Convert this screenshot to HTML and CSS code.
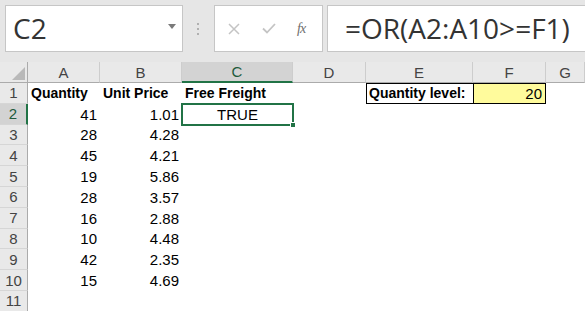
FILE: index.html
```html
<!DOCTYPE html>
<html>
    <head>
        <title>Free Freight</title>
        <link rel="stylesheet" href="styles.css">
    </head>
    <body>
        <div class="toolbar">
            <div class="namebox">
                <span class="name">C2</span>
                <svg class="arrow" width="8" height="5" viewBox="0 0 8 5"><path d="M0 0H8L4 5Z" fill="#7a7a7a"/></svg>
            </div>
            <div class="grip">
                <svg width="3" height="12" viewBox="0 0 3 12"><rect x="0" y="0" width="2" height="2" fill="#b0b0b0"/><rect x="0" y="5" width="2" height="2" fill="#b0b0b0"/><rect x="0" y="10" width="2" height="2" fill="#b0b0b0"/></svg>
            </div>
            <div class="buttons">
                <svg class="btn" width="12" height="12" viewBox="0 0 12 12"><path d="M1 1L11 11M11 1L1 11" stroke="#c4c4c4" stroke-width="1.5"/></svg>
                <svg class="btn" width="14" height="11" viewBox="0 0 14 11"><path d="M1 5.5L5 9.5L13 1" stroke="#c4c4c4" stroke-width="1.8" fill="none"/></svg>
                <span class="fx">fx</span>
            </div>
            <div class="formula">=OR(A2:A10&gt;=F1)</div>
        </div>

        <div class="sheet">
            <div class="corner"><svg width="13" height="13" viewBox="0 0 13 13"><path d="M13 0V13H0Z" fill="#b9b9b9"/></svg></div>
            <div class="colhead">A</div>
            <div class="colhead">B</div>
            <div class="colhead selected">C</div>
            <div class="colhead">D</div>
            <div class="colhead">E</div>
            <div class="colhead">F</div>
            <div class="colhead">G</div>

            <div class="rowhead">1</div>
            <div class="cell bold">Quantity</div>
            <div class="cell bold">Unit Price</div>
            <div class="cell bold">Free Freight</div>
            <div class="cell"></div>
            <div class="cell bold boxed">Quantity level:</div>
            <div class="cell num input">20</div>
            <div class="cell"></div>

            <div class="rowhead selected">2</div>
            <div class="cell num">41</div>
            <div class="cell num">1.01</div>
            <div class="cell center active">TRUE<span class="handle"></span></div>
            <div class="cell"></div>
            <div class="cell"></div>
            <div class="cell"></div>
            <div class="cell"></div>

            <div class="rowhead">3</div>
            <div class="cell num">28</div>
            <div class="cell num">4.28</div>
            <div class="cell"></div><div class="cell"></div><div class="cell"></div><div class="cell"></div><div class="cell"></div>

            <div class="rowhead">4</div>
            <div class="cell num">45</div>
            <div class="cell num">4.21</div>
            <div class="cell"></div><div class="cell"></div><div class="cell"></div><div class="cell"></div><div class="cell"></div>

            <div class="rowhead">5</div>
            <div class="cell num">19</div>
            <div class="cell num">5.86</div>
            <div class="cell"></div><div class="cell"></div><div class="cell"></div><div class="cell"></div><div class="cell"></div>

            <div class="rowhead">6</div>
            <div class="cell num">28</div>
            <div class="cell num">3.57</div>
            <div class="cell"></div><div class="cell"></div><div class="cell"></div><div class="cell"></div><div class="cell"></div>

            <div class="rowhead">7</div>
            <div class="cell num">16</div>
            <div class="cell num">2.88</div>
            <div class="cell"></div><div class="cell"></div><div class="cell"></div><div class="cell"></div><div class="cell"></div>

            <div class="rowhead">8</div>
            <div class="cell num">10</div>
            <div class="cell num">4.48</div>
            <div class="cell"></div><div class="cell"></div><div class="cell"></div><div class="cell"></div><div class="cell"></div>

            <div class="rowhead">9</div>
            <div class="cell num">42</div>
            <div class="cell num">2.35</div>
            <div class="cell"></div><div class="cell"></div><div class="cell"></div><div class="cell"></div><div class="cell"></div>

            <div class="rowhead">10</div>
            <div class="cell num">15</div>
            <div class="cell num">4.69</div>
            <div class="cell"></div><div class="cell"></div><div class="cell"></div><div class="cell"></div><div class="cell"></div>

            <div class="rowhead">11</div>
            <div class="cell"></div><div class="cell"></div><div class="cell"></div><div class="cell"></div><div class="cell"></div><div class="cell"></div><div class="cell"></div>
        </div>
    </body>
</html>
```

FILE: styles.css
```css
*{
    box-sizing: border-box;
}
body{
    margin: 0;
    overflow: hidden;
    background: white;
    font-family: "Liberation Sans", Arial, sans-serif;
}
.toolbar{
    background: rgb(230, 230, 230);
    height: 62px;
    display: flex;
    align-items: flex-start;
    padding: 5px 0 0 5px;
    overflow: hidden;
}
.namebox{
    width: 178px;
    height: 47px;
    background: white;
    border: 1px solid rgb(198, 198, 198);
    display: flex;
    align-items: center;
    justify-content: space-between;
    padding: 0 6px 2px 7px;
    flex: none;
}
.name{
    font-family: "Open Sans", sans-serif;
    font-size: 28px;
    color: rgb(51, 51, 51);
}
.arrow{
    margin-top: -2px;
}
.grip{
    width: 31px;
    height: 47px;
    display: flex;
    align-items: center;
    justify-content: center;
    flex: none;
}
.buttons{
    width: 109px;
    height: 47px;
    background: white;
    border: 1px solid rgb(198, 198, 198);
    display: flex;
    align-items: center;
    padding-left: 13px;
    gap: 22px;
    flex: none;
}
.fx{
    font-family: "Liberation Serif", serif;
    font-style: italic;
    font-size: 14px;
    color: rgb(110, 110, 110);
    margin-left: -1px;
    letter-spacing: -1px;
}
.formula{
    margin-left: 4px;
    width: 290px;
    height: 47px;
    background: white;
    border: 1px solid rgb(198, 198, 198);
    font-family: "Open Sans", sans-serif;
    font-size: 28px;
    color: rgb(51, 51, 51);
    display: flex;
    align-items: center;
    padding: 0 0 2px 17px;
    flex: none;
    white-space: nowrap;
}
.sheet{
    display: grid;
    grid-template-columns: 28px 72px 82px 111px 73px 107px 73px 1fr;
    grid-template-rows: 21px;
    grid-auto-rows: 20.8px;
    font-size: 15px;
}
.corner{
    background: rgb(233, 233, 233);
    border-right: 1px solid rgb(171, 171, 171);
    border-bottom: 1px solid rgb(171, 171, 171);
    display: flex;
    align-items: flex-end;
    justify-content: flex-end;
    padding: 0 2px 2px 0;
}
.colhead{
    background: rgb(233, 233, 233);
    border-right: 1px solid rgb(205, 205, 205);
    border-bottom: 1px solid rgb(171, 171, 171);
    color: rgb(68, 68, 68);
    display: flex;
    align-items: center;
    justify-content: center;
    font-size: 15px;
}
.colhead.selected{
    background: rgb(211, 211, 211);
    color: rgb(33, 90, 60);
    border-bottom: 2px solid rgb(33, 115, 70);
}
.rowhead{
    background: rgb(233, 233, 233);
    border-right: 1px solid rgb(171, 171, 171);
    border-bottom: 1px solid rgb(214, 214, 214);
    color: rgb(68, 68, 68);
    display: flex;
    align-items: center;
    justify-content: center;
    font-size: 15px;
}
.rowhead.selected{
    background: rgb(211, 211, 211);
    color: rgb(33, 90, 60);
    border-right: 2px solid rgb(33, 115, 70);
}
.cell{
    display: flex;
    align-items: center;
    padding: 0 3px;
    color: black;
    white-space: nowrap;
}
.bold{
    font-weight: bold;
    font-size: 14px;
}
.num{
    justify-content: flex-end;
}
.center{
    justify-content: center;
}
.boxed{
    border: 1px solid black;
    border-right: none;
    padding-left: 2px;
}
.input{
    background: rgb(255, 251, 156);
    border: 1px solid black;
}
.active{
    position: relative;
}
.active::after{
    content: "";
    position: absolute;
    left: -1px;
    top: -1px;
    right: -1px;
    bottom: -1px;
    border: 2px solid rgb(33, 115, 70);
}
.handle{
    position: absolute;
    right: -3px;
    bottom: -3px;
    width: 6px;
    height: 6px;
    background: rgb(33, 115, 70);
    border: 1px solid white;
    z-index: 1;
}
```
